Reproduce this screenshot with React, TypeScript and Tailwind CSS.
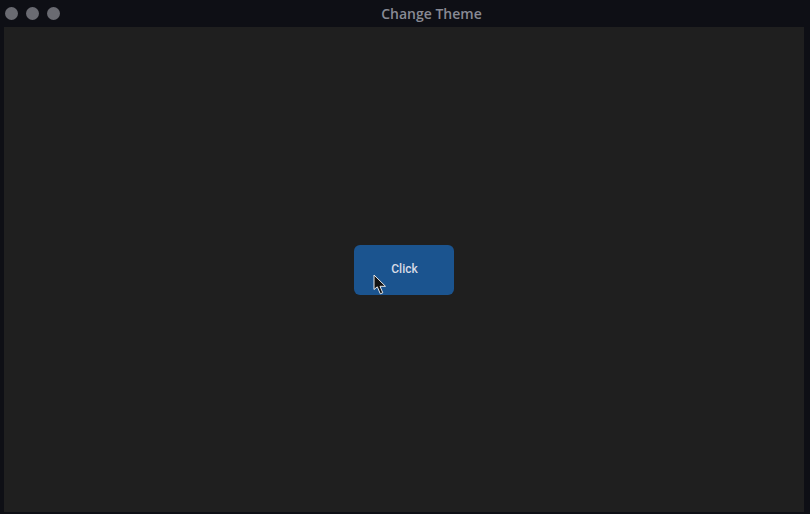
import React from "react";

export default function App() {
  return (
    <div className="w-[810px] h-[514px] bg-[#0e0f15] flex flex-col overflow-hidden">
      <div className="h-[27px] relative flex items-center shrink-0">
        <div className="flex gap-[8px] pl-[5px] pt-[0px]">
          <div className="w-[13px] h-[13px] rounded-full bg-[#6a6b72]" />
          <div className="w-[13px] h-[13px] rounded-full bg-[#6a6b72]" />
          <div className="w-[13px] h-[13px] rounded-full bg-[#6a6b72]" />
        </div>
        <div
          className="absolute left-0 right-0 top-0 h-[27px] pl-[53px] flex items-center justify-center text-[14px] font-semibold text-[#888a94]"
          style={{ fontFamily: '"Open Sans", "Noto Sans", sans-serif' }}
        >
          Change Theme
        </div>
      </div>
      <div className="flex-1 ml-[4px] mr-[6px] mb-[2px] bg-[#1f1f1f] flex items-center justify-center">
        <div className="relative w-[100px] h-[50px] rounded-[6px] bg-[#1b548f] flex items-center justify-center mt-[1px]">
          <span
            className="text-[12px] font-medium text-[#d6dbe6] pl-[1px] pb-[2px]"
            style={{ fontFamily: 'Roboto, "Noto Sans", sans-serif' }}
          >
            Click
          </span>
          <svg
            className="absolute left-[19px] top-[29px]"
            width="15"
            height="22"
            viewBox="0 0 15 22"
          >
            <path
              d="M1 1 L1 15.5 L4.3 12.8 L7.3 19.8 L9.8 18.8 L7 12.3 L12.5 12.3 Z"
              fill="#111"
              stroke="#e8e8e8"
              strokeWidth="1"
              strokeLinejoin="round"
            />
          </svg>
        </div>
      </div>
    </div>
  );
}
